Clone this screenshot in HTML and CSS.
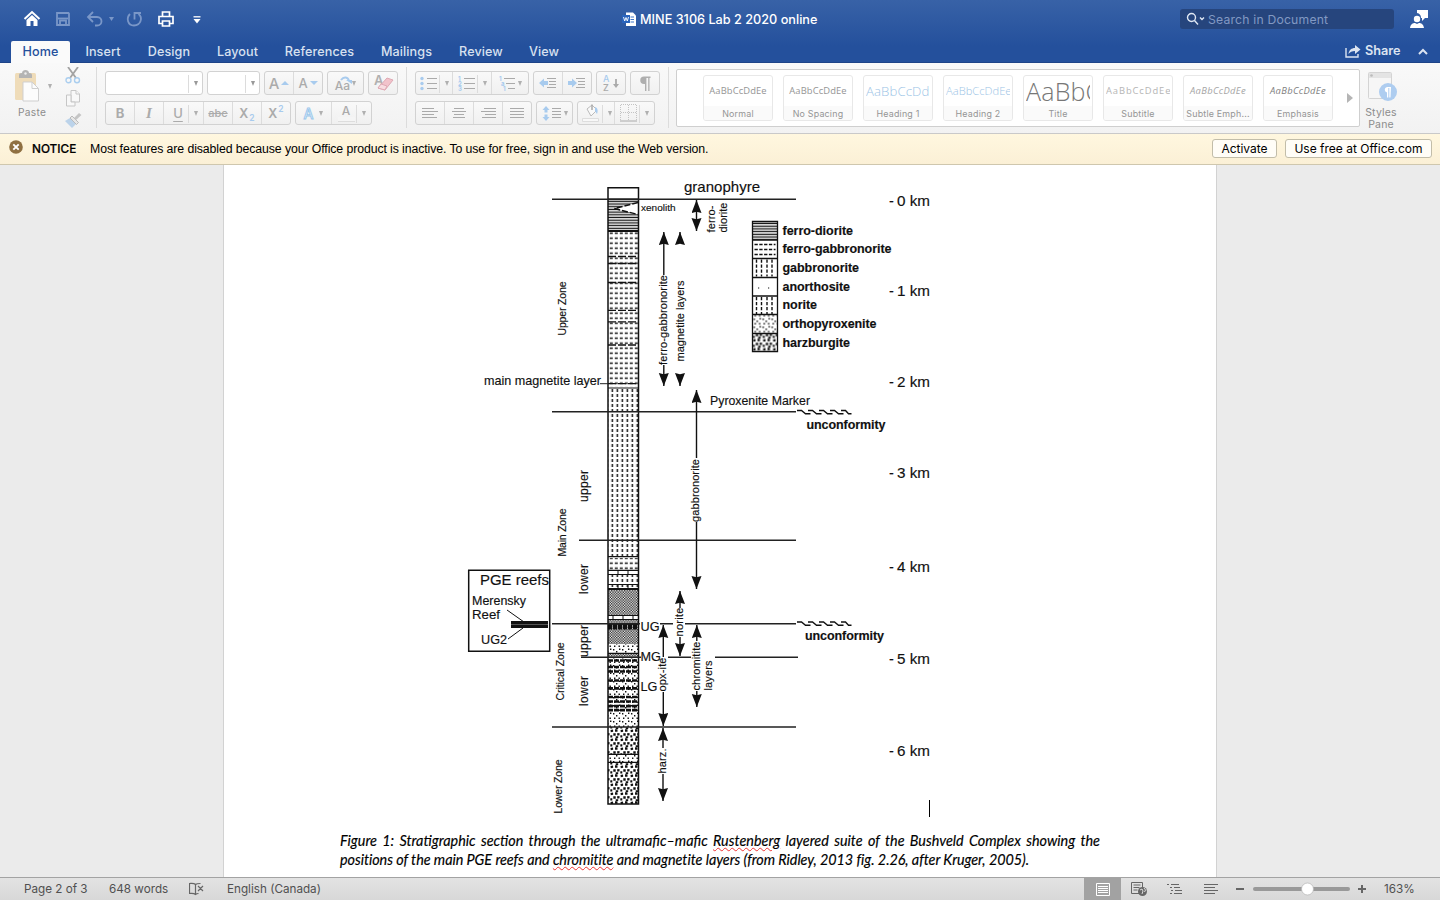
FILE: index.html
```html
<!DOCTYPE html>
<html lang="en">
<head>
<meta charset="utf-8">
<title>MINE 3106 Lab 2 2020 online</title>
<link rel="stylesheet" href="styles.css">
</head>
<body>
<header class="top">
  <div class="titlebar">
    <div class="quick">
      <svg width="190" height="24" viewBox="20 7 190 24" fill="none">
        <path d="M24.500 19l7.500-7 7.500 7" stroke="#fff" stroke-width="2"/>
        <path d="M26.500 20l5.500-5 5.500 5v6h-4v-5h-3v5h-4z" fill="#fff"/>
        <g stroke="#7a97c8" stroke-width="1.800">
          <path d="M57 13h11.500l.5.500V25H57zM60 25v-4.500h6V25"/><path d="M58 18.500h10"/>
          <path d="M93 12l-5 5 5 5M88.500 17h8.500c6 0 6 8.500 0 8.500h-2"/>
          <path d="M130 14c-4 4-2.500 11.500 4 11.500 7 0 9-8 4.500-11.500M141 13h-6.500v6.500"/>
        </g>
        <path d="M109 17h5l-2.500 4z" fill="#7a97c8"/>
        <g stroke="#fff" stroke-width="1.700">
          <path d="M162.500 16v-4h7v4M162 23.500h-3v-7h14v7h-3M162.500 21h7v5h-7z"/>
        </g>
        <path d="M193.500 16.800h7" stroke="#fff" stroke-width="1.300"/><path d="M193.500 19h7l-3.500 4.500z" fill="#fff"/>
      </svg>
    </div>
    <div class="doc-title">
      <svg width="14" height="15" viewBox="0 0 14 15"><path d="M4 .5h7l3 3V14H4z" fill="#fff"/><path d="M8.500 5H12M8.500 7.500H12M8.500 10H12" stroke="#3f77c9" stroke-width="1.200"/><path d="M0 3h8v8H0z" fill="#2a64bd"/><path d="M1.500 5l1.200 4L4 5.500 5.300 9l1.200-4" fill="none" stroke="#fff" stroke-width=".9"/></svg>
      <span>MINE 3106 Lab 2 2020 online</span>
    </div>
    <div class="search">
      <svg width="20" height="14" viewBox="0 0 20 14" fill="none" stroke="#dfe7f3" stroke-width="1.400"><circle cx="5.500" cy="5.500" r="4"/><path d="M8.500 8.500l3.500 4M14 5.500l2 2 2-2"/></svg>
      <span>Search in Document</span>
    </div>
    <svg class="person" width="20" height="20" viewBox="0 0 20 20" fill="#fff"><path d="M8 1h11v8h-3l-3 3V9h-1a5 5 0 0 0-4-5z"/><circle cx="8" cy="10" r="3.200"/><path d="M1 19c.5-4 3-5 5-5l2 1 2-1c2 0 4.500 1 5 5z"/></svg>
  </div>
  <nav class="tabs">
    <a class="tab active" style="width:59px">Home</a>
    <a class="tab" style="width:66px">Insert</a>
    <a class="tab" style="width:66px">Design</a>
    <a class="tab" style="width:71px">Layout</a>
    <a class="tab" style="width:93px">References</a>
    <a class="tab" style="width:81px">Mailings</a>
    <a class="tab" style="width:68px">Review</a>
    <a class="tab" style="width:58px">View</a>
    <div class="share">
      <svg width="16" height="14" viewBox="0 0 16 14"><path d="M1 4v9h12v-3" fill="none" stroke="#dce4f1" stroke-width="1.400"/><path d="M3.500 10c.5-4 3-6 6.500-6V1l5.500 4.500L10 10V7c-3 0-5 1-6.500 3z" fill="#dce4f1"/></svg>
      <span>Share</span>
      <svg width="10" height="7" viewBox="0 0 10 7"><path d="M1 6l4-4 4 4" fill="none" stroke="#dce4f1" stroke-width="2"/></svg>
    </div>
  </nav>
</header>

<section class="ribbon">
  <div class="group paste">
    <div class="paste-main">
      <svg width="28" height="32" viewBox="0 0 28 32"><rect x="1" y="3" width="21" height="27" rx="1.500" fill="#efdcb9"/><path d="M5 8V5q0-2 3-2c0-4 7-4 7 0q3 0 3 2v3z" fill="#b4b4b4"/><circle cx="11.500" cy="3.500" r="1.200" fill="#eee"/><path d="M9 12h9l6.500 6.500V31H9z" fill="#fcfcfc" stroke="#cfcfcf"/><path d="M18 12v6.500h6.500" fill="none" stroke="#cfcfcf"/></svg>
      <span>Paste</span>
    </div>
    <i class="arr"></i>
    <div class="clip">
      <svg width="16" height="17" viewBox="0 0 16 17" fill="none" stroke-width="1.800"><path d="M3 0l8 11M13 0L5 11" stroke="#a3a3a3"/><circle cx="3.500" cy="13.200" r="2.500" stroke="#aaceef" stroke-width="1.400"/><circle cx="12" cy="13.200" r="2.500" stroke="#aaceef" stroke-width="1.400"/></svg>
      <svg width="16" height="17" viewBox="0 0 16 17" fill="#f8f8f8" stroke="#c6c6c6"><path d="M6 .5h5l3.500 3.500v8H6z"/><path d="M11 .5V4h3.500M1.500 5H6v7h4v4H1.500z"/></svg>
      <svg width="17" height="15" viewBox="0 0 17 15"><path d="M0 8l5-3 6 6-4 4z" fill="#bcd3ea"/><path d="M5 5l2-2 6.500 6.500-2 2z" fill="#e7e7e7" stroke="#bbb"/><path d="M9 5l5-5 2.500 2L11 7z" fill="#c5c5c5"/></svg>
    </div>
  </div>
  <div class="group font">
    <div class="row">
      <div class="btns combo" style="width:98px"><b class="sp"></b><i class="arr cut"></i></div>
      <div class="btns combo" style="width:53px"><b class="sp"></b><i class="arr cut"></i></div>
      <div class="btns" style="width:59px"><b class="btn" style="width:29px"><span class="ga">A</span><i class="up"></i></b><b class="btn"><span class="ga sm">A</span><i class="down"></i></b></div>
      <div class="btns" style="width:37px"><b class="btn"><span class="aa">Aa</span><svg class="loop" width="13" height="8" viewBox="0 0 13 8"><path d="M1 4c3-4 7-3 8 1" fill="none" stroke="#a8cbee" stroke-width="2"/><path d="M6 4h6v4z" fill="#a8cbee"/></svg><i class="arr"></i></b></div>
      <div class="btns" style="width:30px"><b class="btn"><svg width="24" height="22" viewBox="0 0 24 22"><text class="g" x="3" y="13" font-size="13">A</text><path d="M16 6l6 2-8 10-7-2z" fill="#f2c3cb" stroke="#dfa9b4"/><path d="M7 16l3-4 6 2-2 4z" fill="#f8dde1" stroke="#dfa9b4"/></svg></b></div>
    </div>
    <div class="row">
      <div class="btns" style="width:186px">
        <b class="btn" style="width:29px"><span class="gb">B</span></b><b class="btn" style="width:29px"><span class="gi">I</span></b><b class="btn" style="width:40px"><span class="gu">U</span><i class="arr cut"></i></b><b class="btn" style="width:29px"><span class="gs">abc</span></b><b class="btn" style="width:29px"><span class="gx">X<sub>2</sub></span></b><b class="btn"><span class="gx">X<sup>2</sup></span></b>
      </div>
      <div class="btns" style="width:77px"><b class="btn" style="width:36px"><span class="glow">A</span><i class="arr"></i></b><b class="btn"><span class="color">A</span><i class="arr cut"></i></b></div>
    </div>
  </div>
  <div class="group para">
    <div class="row">
      <div class="btns" style="width:114px">
        <b class="btn" style="width:37px"><svg width="18" height="15" viewBox="0 0 18 15"><path d="M7 2.500h10M7 7.500h10M7 12.500h10" stroke="#aaa"/><g fill="#a8cbee"><circle cx="2" cy="2.500" r="1.700"/><circle cx="2" cy="7.500" r="1.700"/><circle cx="2" cy="12.500" r="1.700"/></g></svg><i class="arr cut"></i></b>
        <b class="btn" style="width:39px"><svg width="18" height="15" viewBox="0 0 18 15"><path d="M6 2.500h11M6 7.500h11M6 12.500h11" stroke="#aaa"/><g fill="#a8cbee" font-size="6" font-weight="700"><text x="0" y="5">1</text><text x="0" y="10">2</text><text x="0" y="15">3</text></g></svg><i class="arr cut"></i></b>
        <b class="btn"><svg width="18" height="15" viewBox="0 0 18 15"><path d="M6 2.500h11M8 7.500h9M10 12.500h7" stroke="#aaa"/><g fill="#a8cbee" font-size="6" font-weight="700"><text x="1" y="4.500">1</text><text x="3" y="9.500">a</text><text x="5" y="15">1</text></g></svg><i class="arr"></i></b>
      </div>
      <div class="btns" style="width:59px">
        <b class="btn" style="width:29px"><svg width="18" height="12" viewBox="0 0 18 12"><path d="M8 1.500h9M10 4.500h7M10 7.500h7M8 10.500h9" stroke="#aaa"/><path d="M0 6l5-4.500V4h4v4H5v2.500z" fill="#a8cbee"/></svg></b>
        <b class="btn"><svg width="18" height="12" viewBox="0 0 18 12"><path d="M8 1.500h9M10 4.500h7M10 7.500h7M8 10.500h9" stroke="#aaa"/><path d="M9 6L4 1.500V4H0v4h4v2.500z" fill="#a8cbee"/></svg></b>
      </div>
      <div class="btns" style="width:30px"><b class="btn"><svg width="18" height="18" viewBox="0 0 18 18"><text x="1" y="8" font-size="9" fill="#a8cbee">A</text><text x="1" y="17" font-size="9" fill="#aaa">Z</text><path d="M14 5v7" stroke="#aaa" stroke-width="1.800"/><path d="M11 10l3 4 3-4z" fill="#aaa"/></svg></b></div>
      <div class="btns" style="width:30px"><b class="btn"><svg width="12" height="15" viewBox="0 0 12 15"><path d="M11.500.5H5a3.700 3.700 0 0 0 0 7.500h1v7h1.400V2h1.800v13h1.300V2h1z" fill="#aeaeae"/></svg></b></div>
    </div>
    <div class="row">
      <div class="btns" style="width:117px">
        <b class="btn" style="width:29px"><svg width="16" height="12" viewBox="0 0 16 12"><path d="M0 1.500h12M0 4.500h16M0 7.500h12M0 10.500h15" stroke="#aaa"/></svg></b>
        <b class="btn" style="width:29px"><svg width="14" height="12" viewBox="0 0 14 12"><path d="M2 1.500h10M0 4.500h14M2 7.500h10M1 10.500h12" stroke="#aaa"/></svg></b>
        <b class="btn" style="width:29px"><svg width="15" height="12" viewBox="0 0 15 12"><path d="M3 1.500h12M0 4.500h15M4 7.500h11M1 10.500h14" stroke="#aaa"/></svg></b>
        <b class="btn"><svg width="14" height="12" viewBox="0 0 14 12"><path d="M0 1.500h14M0 4.500h14M0 7.500h14M0 10.500h14" stroke="#aaa"/></svg></b>
      </div>
      <div class="btns" style="width:37px"><b class="btn"><svg width="20" height="15" viewBox="0 0 20 15"><path d="M10 2.500h9M10 5.500h9M10 8.500h9M10 11.500h9" stroke="#aaa"/><path d="M4 0l3.500 4h-2v2.500h-3V4h-2zM4 15l3.500-4h-2V8.500h-3V11h-2z" fill="#a8cbee"/></svg><i class="arr"></i></b></div>
      <div class="btns" style="width:78px">
        <b class="btn" style="width:37px"><svg width="20" height="20" viewBox="0 0 20 20"><path d="M6 6l5-4 5 5-6 6z" fill="#fafafa" stroke="#bbb"/><path d="M11 7V1.500" stroke="#aaa" stroke-width="1.500"/><path d="M14 4c3 1 3 4 2 7l-2-3z" fill="#a8cbee"/><path d="M1.500 15.500h16v3h-16z" fill="#f8f8f8" stroke="#ddd"/></svg><i class="arr cut"></i></b>
        <b class="btn"><svg width="18" height="18" viewBox="0 0 18 18" fill="none"><path d="M.5 16V.5h16V16M8.500 1v15M1 8.500h16" stroke="#c4c4c4" stroke-dasharray="1 1"/><path d="M0 17h17" stroke="#aaa"/></svg><i class="arr cut"></i></b>
      </div>
    </div>
  </div>
  <div class="gallery">
    <div class="card"><p>AaBbCcDdEe</p><span>Normal</span></div>
    <div class="card"><p>AaBbCcDdEe</p><span>No Spacing</span></div>
    <div class="card h1"><p>AaBbCcDd</p><span>Heading 1</span></div>
    <div class="card h2"><p>AaBbCcDdEe</p><span>Heading 2</span></div>
    <div class="card title"><p>AaBbC</p><span>Title</span></div>
    <div class="card subtitle"><p>AaBbCcDdEe</p><span>Subtitle</span></div>
    <div class="card em light"><p>AaBbCcDdEe</p><span>Subtle Emph...</span></div>
    <div class="card em"><p>AaBbCcDdEe</p><span>Emphasis</span></div>
    <i class="more"></i>
  </div>
  <div class="pane">
    <svg width="30" height="30" viewBox="0 0 30 30"><rect x=".5" y=".5" width="23" height="26" rx="1" fill="#f6f6f6" stroke="#d4d4d4"/><path d="M1 1h22v5H1z" fill="#e4e4e4"/><circle cx="3.500" cy="3.500" r="1.300" fill="#bbb"/><circle cx="20" cy="20" r="9" fill="#aecdf0"/><path d="M23 15h-4a2.800 2.800 0 0 0 0 5.500v5h1.300V16h1v9.500h1.200z" fill="#fff"/></svg>
    <span>Styles<br>Pane</span>
  </div>
</section>

<section class="notice">
  <svg width="14" height="14" viewBox="0 0 14 14"><circle cx="7" cy="7" r="6.800" fill="#8f7042"/><path d="M4.300 4.300l5.400 5.400M9.700 4.300L4.300 9.700" stroke="#fff" stroke-width="1.900"/></svg>
  <strong>NOTICE</strong>
  <p>Most features are disabled because your Office product is inactive. To use for free, sign in and use the Web version.</p>
  <button style="width:65px">Activate</button>
  <button style="width:147px">Use free at Office.com</button>
</section>

<main class="desk">
  <article class="page">
    <svg class="figure" width="992" height="667" viewBox="224 165 992 667">
      <defs>
        <pattern id="ferrodiorite" width="30" height="2.700" patternUnits="userSpaceOnUse" y="200"><path d="M0 1.300h30" stroke="#111" stroke-width="1.300"/></pattern>
        <pattern id="ferrogab" x="609" y="230.700" width="5" height="5" patternUnits="userSpaceOnUse"><path d="M.8 2.500h3" stroke="#111" stroke-width="1.500"/></pattern>
        <pattern id="gab" x="609.800" y="388" width="5" height="5" patternUnits="userSpaceOnUse"><path d="M2.500 1v3" stroke="#111" stroke-width="1.500"/></pattern>
        <pattern id="norite" width="2.600" height="2.600" patternUnits="userSpaceOnUse"><path d="M0 0h1.300v1.300H0zM1.300 1.300h1.300v1.300H1.300z" fill="#1a1a1a"/></pattern>
        <pattern id="opx" width="9" height="8" patternUnits="userSpaceOnUse"><path d="M1 1h1.400v1.400H1zM4 3h1.400v1.400H4zM7 .5h1.400v1.400H7zM2 5.500h1.400v1.400H2zM6.500 5.500h1.400v1.400H6.500z" fill="#111"/></pattern>
        <pattern id="harz" width="10" height="9" patternUnits="userSpaceOnUse"><path d="M.5 1l2.500-.5.200 2.200L.8 3.200zM5 .3h2.500v2.400H5zM7.300 4l2.400.3-.3 2.300-2.300-.2zM3.300 4.300h2.400v2.400H3.300zM.3 6.200h2v2.300h-2zM5.700 7.200h2.500V9H5.700z" fill="#111"/></pattern>
        <marker id="head" markerUnits="userSpaceOnUse" markerWidth="14" markerHeight="12" refX="13" refY="5" orient="auto-start-reverse"><path d="M13 5L0 0l1.200 5L0 10z" fill="#111"/></marker>
        <path id="wave" d="M0 0h4.500l4 3.200h5M11 0h4.500l4 3.200h5M22 0h4.500l4 3.200h5M33 0h4.500l4 3.200h5M44 0h4.500l3 3.200h3" fill="none" stroke="#111" stroke-width="1.400"/>
      </defs>

      <!-- strata column -->
      <g>
        <path fill="url(#ferrodiorite)" d="M608 199h30v32h-30z"/>
        <path d="M614.500 208.500L638 202.500v12z" fill="#fff"/><path d="M638 202.500l-23.500 6L638 214.500" fill="none" stroke="#111" stroke-width="1.500" stroke-dasharray="6 2"/>
        <path fill="url(#ferrogab)" d="M608 231h30v156h-30z"/>
        <path fill="url(#gab)" d="M608 388h30v168h-30z"/>
        <path fill="url(#ferrogab)" d="M608 558h30v12h-30z"/>
        <path fill="url(#gab)" d="M608 575h30v13h-30z"/>
        <path fill="url(#norite)" d="M608 589h30v26h-30zM608 620h30v24h-30zM608 653h30v5h-30z"/>
        <path fill="url(#opx)" d="M608 644h30v9h-30zM608 658h30v69h-30zM608 754h30v8h-30z"/>
        <path fill="url(#harz)" d="M608 727h30v27h-30zM608 762h30v42h-30z"/>
        <g fill="none" stroke="#111">
          <path d="M608 256.500h30M608 263.500h30M608 282.500h30M608 310.300h30M608 321.800h30M608 345h30M608 383.700h30" stroke-width="1.300" stroke-dasharray="8 2"/>
          <path d="M608 199.200h30M608 388h30M608 556.700h30M608 570.300h30M608 574.500h30M608 584.500h30M608 615.500h30M608 619.500h30M608 653.300h30M608 754.300h30M608 762.300h30" stroke-width="1.200"/>
          <path d="M608 231h30M608 589h30" stroke-width="2"/>
          <path d="M613 615v5M623 615v5M633 615v5M618 584v5M628 584v5M618 570v5M628 570v5"/>
          <path d="M608 626.800h30" stroke-width="5.500" stroke-dasharray="4 1"/>
          <path d="M608 624h30" stroke-width="1.500"/>
          <path d="M608 660.500h30M608 667h30M608 671.500h30M608 680.500h30M608 688.300h30M608 697h30M608 701.500h30M608 706.200h30M608 710.200h30" stroke-width="2.700" stroke-dasharray="5 1"/>
          <path d="M608 187.800h30.500V804H608z" stroke-width="1.500"/>
        </g>
      </g>

      <!-- zone boundaries -->
      <g stroke="#222" stroke-width="1.500" fill="none">
        <path d="M552 199.200h244M552 411.800h244M579 540.200h217M552 623.700h88M660 623.700h13M685 623.700h111M581 657.200h60M668 657.200h23M715 657.200h83M552 727h244"/>
        <path d="M600 383.700h8" stroke-width="1"/>
      </g>
      <use href="#wave" x="797" y="410.500"/>
      <use href="#wave" x="797" y="622"/>

      <!-- extent arrows -->
      <g stroke="#111" stroke-width="1.400">
        <path d="M696.500 200v31" marker-start="url(#head)" marker-end="url(#head)"/>
        <path d="M663.800 275V232" marker-end="url(#head)"/><path d="M663.800 365v21" marker-end="url(#head)"/>
        <path d="M680 243v-11" marker-end="url(#head)"/><path d="M680 375v11" marker-end="url(#head)"/>
        <path d="M696.500 458v-68" marker-end="url(#head)"/><path d="M696.500 522v67" marker-end="url(#head)"/>
        <path d="M680 608v-17" marker-end="url(#head)"/><path d="M680 637v19" marker-end="url(#head)"/>
        <path d="M663.300 657v-32" marker-end="url(#head)"/><path d="M663.300 692v34" marker-end="url(#head)"/>
        <path d="M696.800 641v-16" marker-end="url(#head)"/><path d="M696.800 691v16" marker-end="url(#head)"/>
        <path d="M663 748v-20" marker-end="url(#head)"/><path d="M663 774v27" marker-end="url(#head)"/>
      </g>

      <!-- reef inset -->
      <path d="M468.700 570.200h81v81h-81z" fill="#fff" stroke="#111" stroke-width="1.500"/>
      <path d="M511 624.500h37" stroke="#111" stroke-width="7"/><path d="M511 624.500h37" stroke="#666" stroke-width=".8"/>
      <path d="M507 610l17 12M508 639l15-11" stroke="#111"/>

      <g class="lbl">
        <text x="684" y="192" font-size="14.800" textLength="76" lengthAdjust="spacingAndGlyphs">granophyre</text>
        <text x="641" y="211" font-size="9.800" textLength="34.500" lengthAdjust="spacingAndGlyphs">xenolith</text>
        <text x="484" y="384.500" font-size="12.700" textLength="117" lengthAdjust="spacingAndGlyphs">main magnetite layer</text>
        <text x="710" y="405" font-size="12.700" textLength="100" lengthAdjust="spacingAndGlyphs">Pyroxenite Marker</text>
        <text x="480" y="585" font-size="14.800" textLength="69" lengthAdjust="spacingAndGlyphs">PGE reefs</text>
        <text x="472" y="604.500" font-size="12.700" textLength="54" lengthAdjust="spacingAndGlyphs">Merensky</text>
        <text x="472" y="618.500" font-size="12.700" textLength="28" lengthAdjust="spacingAndGlyphs">Reef</text>
        <text x="481" y="644" font-size="12.700" textLength="26" lengthAdjust="spacingAndGlyphs">UG2</text>
        <text x="640.500" y="630.500" font-size="12.700">UG</text>
        <text x="640.500" y="660.500" font-size="12.700">MG</text>
        <text x="640.500" y="690.500" font-size="12.700">LG</text>
      </g>
      <g class="lbl" font-size="11">
        <text transform="translate(566 335.500) rotate(-90)" textLength="54" font-size="10.500">Upper Zone</text>
        <text transform="translate(566 556.500) rotate(-90)" textLength="48" font-size="10.500">Main Zone</text>
        <text transform="translate(563.500 700.500) rotate(-90)" textLength="58" font-size="10.500">Critical Zone</text>
        <text transform="translate(562 813.500) rotate(-90)" textLength="54" font-size="10.500">Lower Zone</text>
        <text transform="translate(587.500 502) rotate(-90)" textLength="32" font-size="12">upper</text>
        <text transform="translate(587.500 594) rotate(-90)" textLength="30" font-size="12">lower</text>
        <text transform="translate(587.500 657) rotate(-90)" textLength="32" font-size="12">upper</text>
        <text transform="translate(587.500 706) rotate(-90)" textLength="30" font-size="12">lower</text>
        <text transform="translate(667 365) rotate(-90)" textLength="90">ferro-gabbronorite</text>
        <text transform="translate(683.500 361.500) rotate(-90)" textLength="81">magnetite layers</text>
        <text transform="translate(714.500 232.500) rotate(-90)" textLength="27">ferro-</text>
        <text transform="translate(727 232.500) rotate(-90)" textLength="30">diorite</text>
        <text transform="translate(699.300 522) rotate(-90)" textLength="63">gabbronorite</text>
        <text transform="translate(682.500 636.500) rotate(-90)" textLength="29">norite</text>
        <text transform="translate(665.500 691.500) rotate(-90)" textLength="34">opx-ite</text>
        <text transform="translate(699.500 690.500) rotate(-90)" textLength="49">chromitite</text>
        <text transform="translate(712 690.500) rotate(-90)" textLength="30">layers</text>
        <text transform="translate(665.500 773.500) rotate(-90)" textLength="25">harz.</text>
      </g>

      <!-- key -->
      <g transform="translate(752.500 221.500)">
        <g transform="translate(0 .5)"><path fill="url(#ferrodiorite)" d="M0 0h25v18H0z"/></g>
        <path d="M2 23h21M2 28h21M2 33h21" stroke="#111" stroke-width="1.300" stroke-dasharray="3.300 1.500"/>
        <path d="M4 38v17M9 38v17M14.500 38v17M19.500 38v17M4 75.500v17M9 75.500v17M14.500 75.500v17M19.500 75.500v17" stroke="#111" stroke-width="1.400" stroke-dasharray="3.300 1.700"/>
        <path d="M5.500 66.500h1.200M15.500 66.500h1.200" stroke="#111" stroke-width="1.200"/>
        <path fill="url(#opx)" d="M0 93h25v19H0z"/>
        <path fill="url(#harz)" d="M0 112h25v18H0z"/>
        <path d="M0 0h25v130H0zM0 18.500h25M0 37h25M0 56h25M0 74.500h25M0 93h25M0 112h25" fill="none" stroke="#111" stroke-width="1.300"/>
      </g>
      <g class="lbl" font-size="12.500" font-weight="700">
        <text x="782.500" y="234.500" textLength="70.500">ferro-diorite</text>
        <text x="782.500" y="253" textLength="109">ferro-gabbronorite</text>
        <text x="782.500" y="272" textLength="76.500">gabbronorite</text>
        <text x="782.500" y="290.500" textLength="67.500">anorthosite</text>
        <text x="782.500" y="309" textLength="34.500">norite</text>
        <text x="782.500" y="328" textLength="94">orthopyroxenite</text>
        <text x="782.500" y="346.500" textLength="67.500">harzburgite</text>
        <text x="806.500" y="428.500" textLength="79">unconformity</text>
        <text x="805" y="640" textLength="79">unconformity</text>
      </g>
      <g class="lbl km" font-size="14.500">
        <text x="889" y="206">-</text><text x="897" y="206" textLength="33" lengthAdjust="spacingAndGlyphs">0 km</text>
        <text x="889" y="296">-</text><text x="897" y="296" textLength="33" lengthAdjust="spacingAndGlyphs">1 km</text>
        <text x="889" y="387">-</text><text x="897" y="387" textLength="33" lengthAdjust="spacingAndGlyphs">2 km</text>
        <text x="889" y="478">-</text><text x="897" y="478" textLength="33" lengthAdjust="spacingAndGlyphs">3 km</text>
        <text x="889" y="572">-</text><text x="897" y="572" textLength="33" lengthAdjust="spacingAndGlyphs">4 km</text>
        <text x="889" y="664">-</text><text x="897" y="664" textLength="33" lengthAdjust="spacingAndGlyphs">5 km</text>
        <text x="889" y="756">-</text><text x="897" y="756" textLength="33" lengthAdjust="spacingAndGlyphs">6 km</text>
      </g>
      <path d="M929.500 800v17" stroke="#000"/>
    </svg>
    <div class="caption">
      <p>Figure 1: Stratigraphic section through the ultramafic–mafic <u>Rustenberg</u> layered suite of the Bushveld Complex showing the</p>
      <p class="last">positions of the main PGE reefs and <u>chromitite</u> and magnetite layers (from Ridley, 2013 fig. 2.26, after Kruger, 2005).</p>
    </div>
  </article>
</main>

<footer class="status">
  <span style="width:85px">Page 2 of 3</span>
  <span style="width:80px">648 words</span>
  <svg class="proof" width="17" height="14" viewBox="0 0 17 14" fill="none" stroke="#666"><path d="M6.500 2.500v10M6.500 2.500C5 1 2.500 1.500.5 1.500v10c2 0 4.500-.5 6 1 1-1 2-1 3-1M6.500 2.500c1-1 2.500-1 5-1M9 4l5 5M14 4L9 9" stroke-width="1.200"/></svg>
  <span>English (Canada)</span>
  <div class="views">
    <b class="view on"><svg width="14" height="13" viewBox="0 0 14 13" fill="none" stroke="#fff"><path d="M.5.5h13v12H.5zM2 3.500h10M2 5.500h10M2 7.500h10M2 9.500h10"/></svg></b>
    <b class="view"><svg width="17" height="15" viewBox="0 0 17 15" fill="none" stroke="#666"><path d="M8 11.500H.5V.5h11V5M2.500 3h7M2.500 5.500h6M2.500 8h4"/><circle cx="11.500" cy="9.500" r="4.500" fill="#666" stroke="none"/><path d="M9 8l2-1 1 2-1 3M13 6l1.500 2-1 2" stroke="#ddd"/></svg></b>
    <b class="view"><svg width="16" height="12" viewBox="0 0 16 12" stroke="#666"><path d="M0 1.500h2M4 1.500h8M3 4.500h2M7 4.500h6M4 7.500h2M8 7.500h7M3 10.500h2M7 10.500h8"/></svg></b>
    <b class="view"><svg width="14" height="12" viewBox="0 0 14 12" stroke="#666"><path d="M0 1.500h14M0 4.500h11M0 7.500h14M0 10.500h11"/></svg></b>
  </div>
  <svg class="zoom" width="132" height="14" viewBox="0 0 132 14"><path d="M1 7h8M123 7h8M127 3v8" stroke="#666" stroke-width="2"/><path d="M20 7h93" stroke="#999" stroke-width="4" stroke-linecap="round"/><circle cx="72.500" cy="7" r="6" fill="#fff" stroke="#b5b5b5" stroke-width=".7"/></svg>
  <span>163%</span>
</footer>
</body>
</html>
```
FILE: styles.css
```css
*{box-sizing:border-box;}
body{margin:0; height:900px; overflow:hidden; display:flex; flex-direction:column; font-family:Inter, Roboto, sans-serif; font-size:12px;}
p{margin:0;}
svg{display:block; flex:none;}

/* title bar and tabs */
.top{height:63px; flex:none; background:linear-gradient(#3862a7, #24509c 75%); border-bottom:1px solid #1e4488; color:#fff;}
.titlebar{height:38px; display:flex; align-items:center; padding-left:20px;}
.quick{width:602px;}
.doc-title{display:flex; align-items:center; gap:4px; width:558px; font-size:12.7px; font-weight:500; white-space:nowrap;}
.search{width:214px; height:20px; display:flex; align-items:center; gap:2px; padding-left:6px; border-radius:3px; background:#26457d; color:#8299c3; font-size:12.2px; letter-spacing:.2px;}
.person{margin-left:15px;}
.tabs{height:25px; display:flex; align-items:flex-end; padding-left:11px;}
.tab{height:22px; line-height:21px; text-align:center; font-size:12.6px; font-weight:500; color:#d8e1f0; letter-spacing:.1px;}
.tab.active{background:#fafafa; color:#24509c; border-radius:2px 2px 0 0;}
.share{margin-left:auto; width:95px; height:24px; display:flex; align-items:center; gap:4px; font-size:12.7px; font-weight:600; color:#dce4f1;}
.share span{width:49px; margin-top:-2px;}

/* ribbon */
.ribbon{height:71px; flex:none; display:flex; background:linear-gradient(#f9f9f9, #f2f2f2); border-bottom:1px solid #c9c9c9;}
.group{margin:4px 0 5px; border-right:1px solid #dcdcdc;}
.paste{width:97px; display:flex; align-items:flex-start; color:#8c8c8c;}
.paste-main{width:48px; padding:3px 0 0 14px;}
.paste-main span{display:block; margin:4px 0 0 4px; font-size:10.2px; letter-spacing:.3px;}
.arr{border:2.5px solid transparent; border-top:5px solid #b0b0b0; border-bottom:0; flex:none;}
.paste .arr{margin-top:17px;}
.clip{display:flex; flex-direction:column; gap:6px; margin:0 0 0 13px;}
.font{width:310px; padding-left:8px;}
.para{width:262px; padding-left:8px;}
.row{display:flex; gap:4px; height:24px; margin-top:4px;}
.row + .row{margin-top:6px;}
.btns{display:flex; height:24px; border:1px solid #d2d2d2; border-radius:3px; background:linear-gradient(#f9f9f9, #f0f0f0);}
.combo{background:#fff; justify-content:flex-end; align-items:center; padding-right:4px;}
.combo .arr{border-top-color:#999;}
.btn{position:relative; display:flex; align-items:center; justify-content:center; gap:2px; flex:none; border-right:1px solid #dcdcdc; color:#ababab; font-weight:500;}
.btn:last-child{border-right:0; flex:1;}
.cut{position:relative; margin-left:5px;}
.cut:before{content:""; position:absolute; left:-8px; top:-11px; width:1px; height:18px; background:#dcdcdc;}
.ga{font-size:15px;}
.ga.sm{font-size:13px;}
.up{border:4px solid transparent; border-bottom-color:#a8cbee; border-top:0;}
.down{border:4px solid transparent; border-top-color:#a8cbee; border-bottom:0;}
.aa{font-size:12px; padding-top:4px;}
.loop{position:absolute; left:12px; top:4px;}
.g{fill:#b0b0b0; font-weight:600;}
.gb{font-size:13px; font-weight:700;}
.gi{font:italic 700 15px "Liberation Serif", serif;}
.gu{text-decoration:underline; text-underline-offset:3px; font-size:13px; padding-left:4px;}
.btn .gu + .cut{margin-left:9px;}
.gs{text-decoration:line-through; font-size:11px;}
.gx{font-size:12.5px; font-weight:600;}
.gx sub, .gx sup{font-size:8.5px; color:#a8cbee; line-height:0; margin-left:1px;}
.glow{font-size:14px; color:#fff; -webkit-text-stroke:1px #9cc8ec; margin-right:4px;}
.color{font-size:12px; line-height:12px; border-bottom:4px solid #f5f5f5; width:17px; text-align:center; box-shadow:0 1px 0 #ddd;}

/* style gallery */
.gallery{width:684px; height:58px; margin:6px 0 0 7px; padding:5px 0 0 26px; display:flex; gap:10px; background:#fff; border:1px solid #cfcfcf; border-radius:2px;}
.card{width:70px; height:46px; flex:none; display:flex; flex-direction:column; overflow:hidden; border:1px solid #e8e8e8; border-radius:3px; text-align:center; color:#959595;}
.card p{height:31px; line-height:30px; margin:0 2px; overflow:hidden; white-space:nowrap; font-family:"Open Sans", sans-serif; font-size:9.4px; letter-spacing:.1px;}
.card span{height:14px; line-height:15px; background:#fafafa; font-size:8.9px; letter-spacing:.2px; white-space:nowrap;}
.h1 p{font-size:13.2px; font-weight:300; color:#9cc4e6; text-align:left;}
.h2 p{font-size:11.2px; font-weight:300; color:#9cc4e6; text-align:left; letter-spacing:0;}
.title p{font-size:25px; font-weight:300; color:#777; text-align:left; letter-spacing:.2px;}
.subtitle p{letter-spacing:.9px; color:#b5b5b5; text-align:left;}
.em p{font-style:italic; color:#808080; letter-spacing:.35px;}
.light p{color:#a5a5a5;}
.more{border:5px solid transparent; border-left:6px solid #b5b5b5; border-right:0; margin:18px 0 0 4px; height:0;}
.pane{padding:9px 0 0 8px; color:#8c8c8c; font-size:10.5px; line-height:12px; letter-spacing:.2px;}
.pane span{display:block; margin:5px 0 0 -6px; width:38px; text-align:center;}

/* notice */
.notice{height:31px; flex:none; display:flex; align-items:center; padding:0 8px 1px 9px; background:linear-gradient(#fff7df, #fbf0d6); border-bottom:1px solid #cfc7ae; font-family:"Liberation Sans", sans-serif; font-size:12.3px;}
.notice svg{margin-top:-3px;}
.notice strong{width:58px; margin-left:9px; font-family:Inter, sans-serif; font-size:11.8px; font-weight:500; -webkit-text-stroke:.2px #000;}
.notice p{flex:1; white-space:nowrap; letter-spacing:-.095px;}
.notice button{height:19px; margin-left:8px; padding:0; border:1px solid #c2bda9; border-radius:3px; background:#fffdf7; font-family:Inter, sans-serif; font-size:12px; white-space:nowrap;}

/* document */
.desk{flex:1; min-height:0; display:flex; justify-content:center; background:#ebebeb; overflow:hidden;}
.page{width:994px; background:#fff; border:1px solid #d2d2d2; border-width:0 1px;}
.lbl{font-family:"Liberation Sans", Arial, sans-serif; fill:#111; stroke:#111; stroke-width:.15px;}
.caption{width:760px; margin:-1px 0 0 116px; font-family:Lato, sans-serif; font-style:italic; font-size:14.4px; line-height:19px; color:#000; white-space:nowrap; -webkit-text-stroke:.15px #000;}
.caption p{width:760px; text-align-last:justify;}
.caption .last{width:689px; letter-spacing:-.06px;}
.caption u{text-decoration:underline wavy #e33 1px; text-underline-offset:1px;}

/* status bar */
.status{height:23px; flex:none; display:flex; align-items:center; padding-left:24px; background:linear-gradient(#e3e3e3, #d8d8d8); border-top:1px solid #a3a3a3; color:#505050; font-size:11.7px; white-space:nowrap;}
.proof{margin-right:21px;}
.views{margin-left:auto; display:flex; height:22px;}
.view{width:36px; display:flex; align-items:center; justify-content:center;}
.on{background:#a2a2a2; width:37px;}
.zoom{margin:0 17px 0 6px;}
.status > span:last-child{width:56px;}
```
